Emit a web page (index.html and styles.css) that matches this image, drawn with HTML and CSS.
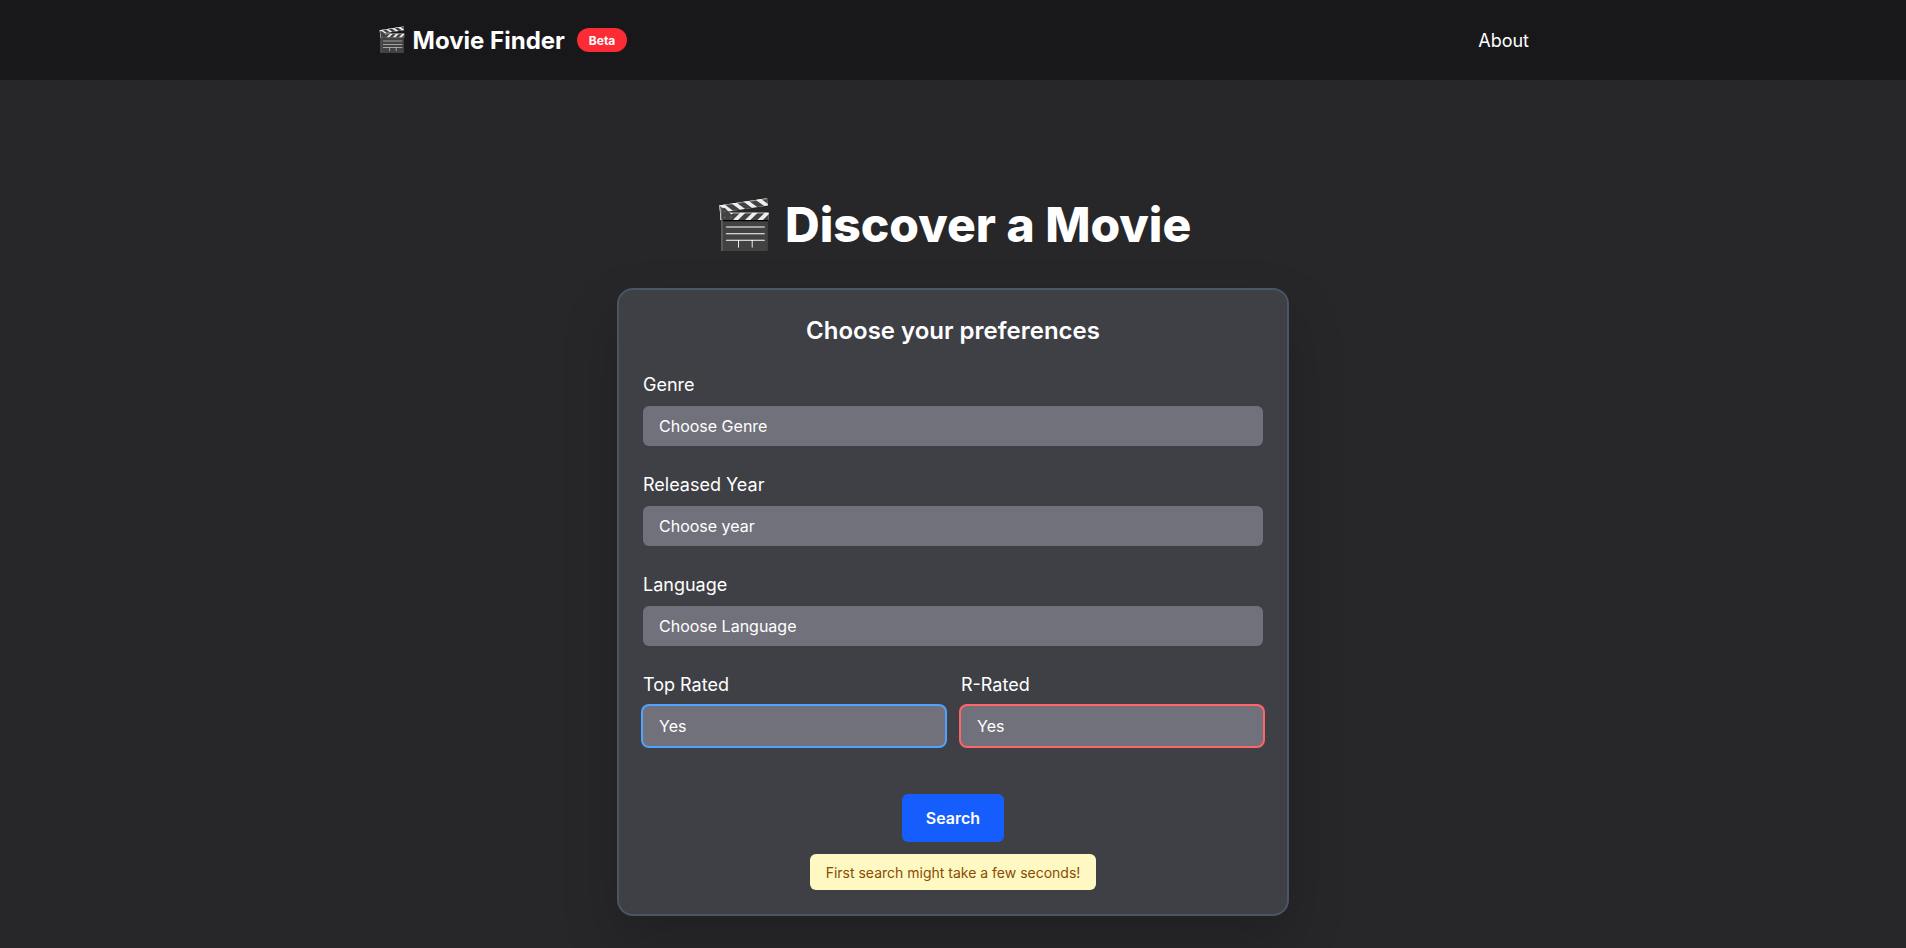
FILE: index.html
```html
<!DOCTYPE html>
<html lang="en">
<head>
<meta charset="utf-8">
<title>Movie Finder</title>
<link rel="stylesheet" href="styles.css">
</head>
<body>
<header class="header">
  <div class="header-inner">
    <div class="brand"><a class="logo"><span class="emoji">🎬</span> Movie Finder</a><span class="badge">Beta</span></div>
    <nav><a class="nav-link">About</a></nav>
  </div>
</header>
<main class="main">
  <h1 class="title"><span class="emoji">🎬</span> Discover a Movie</h1>
  <form class="card">
    <h2 class="card-title">Choose your preferences</h2>
    <div class="field"><label class="label">Genre</label><div class="select">Choose Genre</div></div>
    <div class="field"><label class="label">Released Year</label><div class="select">Choose year</div></div>
    <div class="field"><label class="label">Language</label><div class="select">Choose Language</div></div>
    <div class="row">
      <div class="field"><label class="label">Top Rated</label><div class="select ring-blue">Yes</div></div>
      <div class="field"><label class="label">R-Rated</label><div class="select ring-red">Yes</div></div>
    </div>
    <div class="actions">
      <button class="search" type="button">Search</button>
      <p class="notice">First search might take a few seconds!</p>
    </div>
  </form>
</main>
</body>
</html>
```
FILE: styles.css
```css
* { box-sizing: border-box; margin: 0; }
body {
  height: 948px;
  overflow: hidden;
  background: #27272a;
  color: #fff;
  font: 16px/24px Inter, "Noto Color Emoji", sans-serif;
}
.header { height: 80px; background: #18181b; display: flex; justify-content: center; }
.header-inner { width: 1152px; display: flex; align-items: center; justify-content: space-between; }
.brand { display: flex; align-items: center; gap: 12px; }
.logo { padding-top: 2px; font-size: 24px; line-height: 32px; font-weight: 700; }
.emoji { line-height: 0; vertical-align: 1px; }
.badge { height: 24px; padding: 5px 12px 3px; border-radius: 12px; background: #fb2c36; font-size: 12px; line-height: 16px; font-weight: 700; }
.nav-link { display: block; padding-top: 2px; font-size: 18px; line-height: 28px; }
.main { display: flex; flex-direction: column; align-items: center; padding-top: 121px; }
.title { font-size: 48px; line-height: 48px; font-weight: 800; margin-bottom: 39px; }
.card {
  width: 672px;
  padding: 24px;
  border: 2px solid #4a5565;
  border-radius: 16px;
  background: #3f3f46;
  box-shadow: 0 25px 56px rgba(0, 0, 0, .18);
  display: flex;
  flex-direction: column;
  gap: 24px;
}
.card-title { height: 32px; padding-top: 1px; font-size: 24px; line-height: 32px; font-weight: 600; text-align: center; }
.field { display: flex; flex-direction: column; gap: 8px; }
.label { height: 28px; padding-top: 1px; font-size: 18px; line-height: 28px; }
.select { height: 40px; padding: 8px 16px; border-radius: 6px; background: #71717b; }
.row { display: grid; grid-template-columns: 1fr 1fr; gap: 16px; }
.ring-blue { box-shadow: 0 0 0 2px #51a2ff; }
.ring-red { box-shadow: 0 0 0 2px #ff6467; }
.actions { display: flex; flex-direction: column; align-items: center; gap: 12px; padding-top: 24px; }
.search { height: 48px; padding: 12px 24px; border: 0; border-radius: 6px; background: #155dfc; color: #fff; font: 600 16px/24px Inter, sans-serif; }
.notice { padding: 9px 16px 7px; border-radius: 6px; background: #fef9c2; color: #894b00; font-size: 14px; line-height: 20px; }
```
